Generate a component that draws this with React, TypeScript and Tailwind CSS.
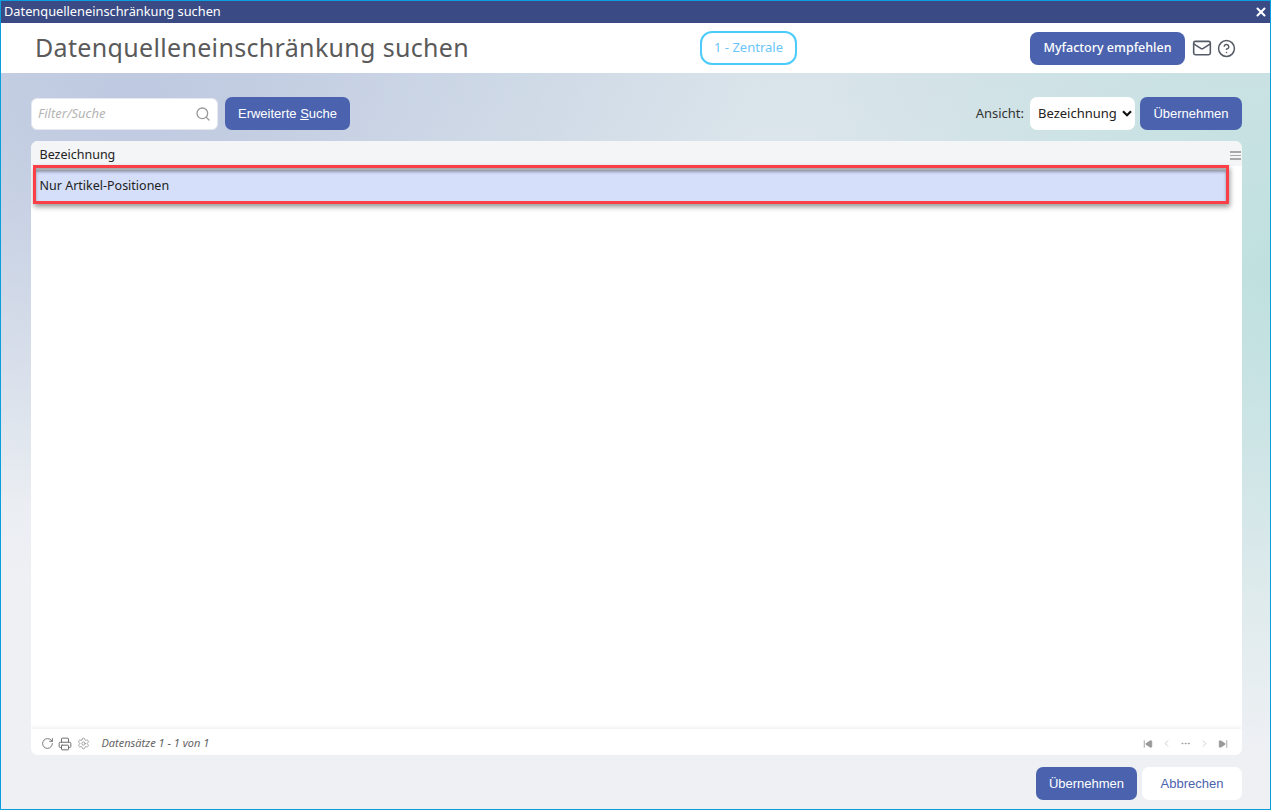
import React from 'react';
import { RotateCw, Printer, Settings, SkipBack, SkipForward, ChevronLeft, ChevronRight, Ellipsis, Mail, CircleHelp, Search, X } from 'lucide-react';

const noto = 'font-["Noto_Sans",sans-serif]';
const arial = 'font-["Liberation_Sans",Arial,sans-serif]';

const App: React.FC = () => {
  return (
    <div className={`h-[810px] w-[1271px] overflow-hidden flex flex-col border-x border-b border-t border-[#0a9fdc] ${noto}`}>
      {/* Title bar */}
      <div className="h-[22px] shrink-0 bg-[#3a4a85] flex items-center justify-between pl-[3px] pr-[2px] text-white text-[12.8px]">
        <span>Datenquelleneinschränkung suchen</span>
        <X size={14} strokeWidth={3.5} />
      </div>

      {/* Header */}
      <div className="h-[50px] shrink-0 bg-white flex items-center pl-[34px] pr-[34px]">
        <h1 className="w-[665px] text-[25px] tracking-[0.33px] text-[#5a5a5a] leading-none pb-[1px]">Datenquelleneinschränkung suchen</h1>
        <div className="w-[97px] h-[34px] rounded-[12px] border-2 border-[#4dcbfb] flex items-center justify-center text-[13px] text-[#6cc5fa]">1 - Zentrale</div>
        <div className="ml-auto flex items-center">
          <button className="h-[33px] w-[155px] rounded-[8px] bg-[#4b63ae] text-white text-[12.5px] font-medium">Myfactory empfehlen</button>
          <Mail size={20} strokeWidth={1.9} className="ml-[7px] text-[#555b66]" />
          <CircleHelp size={19} strokeWidth={1.9} className="ml-[5px] text-[#555b66]" />
        </div>
      </div>

      {/* Body */}
      <div className="flex-1 min-h-0 flex flex-col pl-[30px] pr-[28px] pt-[24px] pb-[9px] bg-[#e9edf2] bg-[radial-gradient(ellipse_620px_420px_at_130px_20px,#bec8e0_0%,#bec8e000_100%),radial-gradient(ellipse_480px_480px_at_1271px_200px,#bfe0df_0%,#bfe0df00_100%),linear-gradient(180deg,#d8e3ea_0%,#eef0f4_70%)]">
        {/* Toolbar */}
        <div className="flex items-center h-[33px] shrink-0">
          <div className="w-[187px] h-[32px] rounded-[6px] bg-white flex items-center justify-between pl-[6px] pr-[6px] border border-[#e6e9f0]">
            <span className="italic text-[13px] text-[#b4b4b4]">Filter/Suche</span>
            <Search size={16} className="text-[#9a9a9a]" />
          </div>
          <button className={`ml-[7px] h-[33px] w-[125px] rounded-[7px] bg-[#4b63ae] text-white text-[13px] ${arial}`}>
            Erweiterte <span className="underline">S</span>uche
          </button>
          <span className="ml-auto text-[13px] text-[#333]">Ansicht:</span>
          <div className="ml-[6px] w-[105px] h-[33px] rounded-[7px] bg-white flex items-center justify-between pl-[8px] pr-[3px] text-[13px] text-[#222]">
            <span>Bezeichnung</span>
            <svg width="10" height="7" viewBox="0 0 10 7" fill="none" stroke="#111" strokeWidth="2.2"><path d="M1 1.2l4 4 4-4" /></svg>
          </div>
          <button className={`ml-[5px] h-[33px] w-[102px] rounded-[7px] bg-[#4b63ae] text-white text-[13px] ${arial}`}>Übernehmen</button>
        </div>

        {/* Grid */}
        <div className="mt-[11px] flex-1 min-h-0 bg-white rounded-[7px] flex flex-col overflow-hidden">
          <div className="h-[25px] shrink-0 pt-[4px] bg-[#f3f5f7] flex items-center justify-between pl-[8.5px] pr-[1px] text-[12.5px] text-[#222]">
            <span>Bezeichnung</span>
            <div className="flex flex-col gap-[2px] w-[11px]">
              <div className="h-[1.5px] bg-[#a8a8a8]" />
              <div className="h-[1.5px] bg-[#a8a8a8]" />
              <div className="h-[1.5px] bg-[#a8a8a8]" />
            </div>
          </div>
          <div className="relative h-[34px] w-[1192px] shrink-0 ml-[4px] mt-[4px] pb-[2px] bg-[#d5dffa] flex items-center pl-[4.5px] text-[12.5px] text-[#222]">
            <span>Nur Artikel-Positionen</span>
            <div className="absolute left-[-2px] top-[-5px] w-[1196px] h-[39px] border-[3px] border-[#fb3f46] shadow-[1px_3px_5px_#00000066,inset_0_4px_3px_#00000055]" />
          </div>
          <div className="flex-1" />
          <div className="h-[26px] pt-[3px] shrink-0 bg-white shadow-[0_-2px_4px_#0000000f] flex items-center pl-[9.5px] pr-[14px] text-[#666]">
            <RotateCw size={13} strokeWidth={1.6} />
            <Printer size={14} strokeWidth={1.6} className="ml-[4px]" />
            <Settings size={13} strokeWidth={1.4} className="ml-[5px] text-[#888]" />
            <span className="ml-[12px] italic text-[11px] text-[#666]">Datensätze 1 - 1 von 1</span>
            <div className="ml-auto flex items-center gap-[8px] text-[#999]">
              <SkipBack size={10} fill="currentColor" />
              <ChevronLeft size={11} className="text-[#ccc]" />
              <Ellipsis size={11} />
              <ChevronRight size={11} className="text-[#ccc]" />
              <SkipForward size={10} fill="currentColor" />
            </div>
          </div>
        </div>

        {/* Footer */}
        <div className="mt-[12px] shrink-0 flex justify-end gap-[5px]">
          <button className={`h-[33px] w-[101px] rounded-[7px] bg-[#4b63ae] text-white text-[13px] ${arial}`}>Übernehmen</button>
          <button className={`h-[33px] w-[100px] rounded-[7px] bg-white text-[#4b63ae] text-[13px] ${arial}`}>Abbrechen</button>
        </div>
      </div>
    </div>
  );
};

export default App;
